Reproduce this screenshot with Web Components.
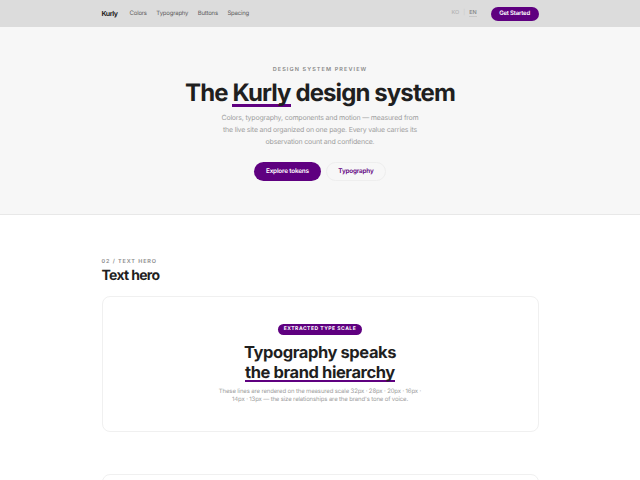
<!DOCTYPE html>
<html>
<head>
<meta charset="utf-8">
<style>
  html, body { margin: 0; height: 100%; overflow: hidden; background: #fff; }
  body { font-family: Inter, "Liberation Sans", sans-serif; color: #1f1f1f; text-rendering: geometricPrecision; }
</style>
</head>
<body>
<site-nav></site-nav>
<site-hero></site-hero>
<text-section></text-section>
<script>
class SiteNav extends HTMLElement {
  constructor(){
    super();
    this.attachShadow({ mode: "open" })
    this.shadowRoot.innerHTML = `
      <style>
      :host { display: flex; align-items: center; height: 27px; padding: 0 101.5px; background: #dcdcdc; font-size: 6px; letter-spacing: -0.2px; }
      .logo { font-size: 7px; font-weight: 700; letter-spacing: -0.45px; color: #1f1f1f; margin-right: 12px; }
      .links { display: flex; gap: 9.5px; color: #5f5f5f; flex: 1; font-weight: 400; }
      .lang { display: flex; gap: 4px; font-size: 5.5px; font-weight: 500; letter-spacing: 0; color: #b4b4b4; margin-right: 14px; }
      .lang i { font-style: normal; color: #cccccc; }
      .lang b { font-weight: 500; color: #808080; border-bottom: 1px solid #c8c8c8; }
      .cta { background: #5f0080; color: #fff; font-weight: 600; padding: 0 8.5px; height: 14px; line-height: 14px; border-radius: 7px; }
      </style>
      <span class="logo">Kurly</span>
      <div class="links"><span>Colors</span><span>Typography</span><span>Buttons</span><span>Spacing</span></div>
      <div class="lang"><span>KO</span><i>|</i><b>EN</b></div>
      <span class="cta">Get Started</span>
    `
  }
}
customElements.define('site-nav', SiteNav);

class SiteHero extends HTMLElement {
  constructor(){
    super();
    this.attachShadow({ mode: "open" })
    this.shadowRoot.innerHTML = `
      <style>
      :host { display: flex; flex-direction: column; align-items: center; height: 188px; box-sizing: border-box; padding-top: 40px; background: #f7f7f7; border-bottom: 1px solid #e8e8e8; }
      .eyebrow { font-size: 5.5px; font-weight: 600; letter-spacing: 1.1px; color: #8a8a8a; line-height: 7px; }
      h1 { margin: 5px 0 0; font-size: 24px; line-height: 28px; font-weight: 750; letter-spacing: -0.9px; color: #1f1f1f; }
      h1 span { box-shadow: inset 0 -3px 0 #5f0080; }
      p { margin: 5px 0 0; font-size: 7px; line-height: 12px; letter-spacing: -0.2px; color: #a0a0a0; text-align: center; width: 200px; }
      .actions { display: flex; gap: 5px; margin-top: 14px; font-size: 6.4px; font-weight: 600; letter-spacing: -0.2px; }
      .actions span { height: 19px; line-height: 19px; border-radius: 10px; box-sizing: border-box; }
      .primary { background: #5f0080; color: #fff; padding: 0 12px; }
      .ghost { color: #5f0080; border: 1px solid #eeeeee; padding: 0 11.5px; line-height: 17px !important; }
      </style>
      <div class="eyebrow">DESIGN SYSTEM PREVIEW</div>
      <h1>The <span>Kurly</span> design system</h1>
      <p>Colors, typography, components and motion — measured from the live site and organized on one page. Every value carries its observation count and confidence.</p>
      <div class="actions"><span class="primary">Explore tokens</span><span class="ghost">Typography</span></div>
    `
  }
}
customElements.define('site-hero', SiteHero);

class TextSection extends HTMLElement {
  constructor(){
    super();
    this.attachShadow({ mode: "open" })
    this.shadowRoot.innerHTML = `
      <style>
      :host { display: block; padding: 44px 101.5px 0; background: #fff; }
      .label { font-size: 5.5px; line-height: 7px; font-weight: 600; letter-spacing: 0.9px; color: #8a8a8a; }
      h2 { margin: 0; font-size: 14px; line-height: 20px; font-weight: 750; letter-spacing: -0.68px; color: #1f1f1f; }
      .card { display: flex; flex-direction: column; align-items: center; height: 136px; box-sizing: border-box; margin-top: 10px; padding-top: 27px; border: 1px solid #f0f0f0; border-radius: 8px; }
      .badge { background: #5f0080; color: #fff; font-size: 5px; font-weight: 700; letter-spacing: 0.5px; line-height: 11px; padding: 0 6px; border-radius: 6px; }
      h3 { margin: 7px 0 0; font-size: 16.5px; line-height: 20px; font-weight: 750; letter-spacing: -0.42px; text-align: center; color: #1f1f1f; }
      h3 span { box-shadow: inset 0 -2px 0 #5f0080; }
      p { margin: 6px 0 0; font-size: 6px; line-height: 8px; letter-spacing: -0.14px; color: #a0a0a0; text-align: center; width: 206px; }
      .next { height: 40px; margin-top: 42px; border: 1px solid #f0f0f0; border-radius: 8px; }
      </style>
      <div class="label">02 / TEXT HERO</div>
      <h2>Text hero</h2>
      <div class="card">
        <span class="badge">EXTRACTED TYPE SCALE</span>
        <h3>Typography speaks<br><span>the brand hierarchy</span></h3>
        <p>These lines are rendered on the measured scale 32px · 28px · 20px · 16px · 14px · 13px — the size relationships are the brand's tone of voice.</p>
      </div>
      <div class="next"></div>
    `
  }
}
customElements.define('text-section', TextSection);
</script>
</body>
</html>
